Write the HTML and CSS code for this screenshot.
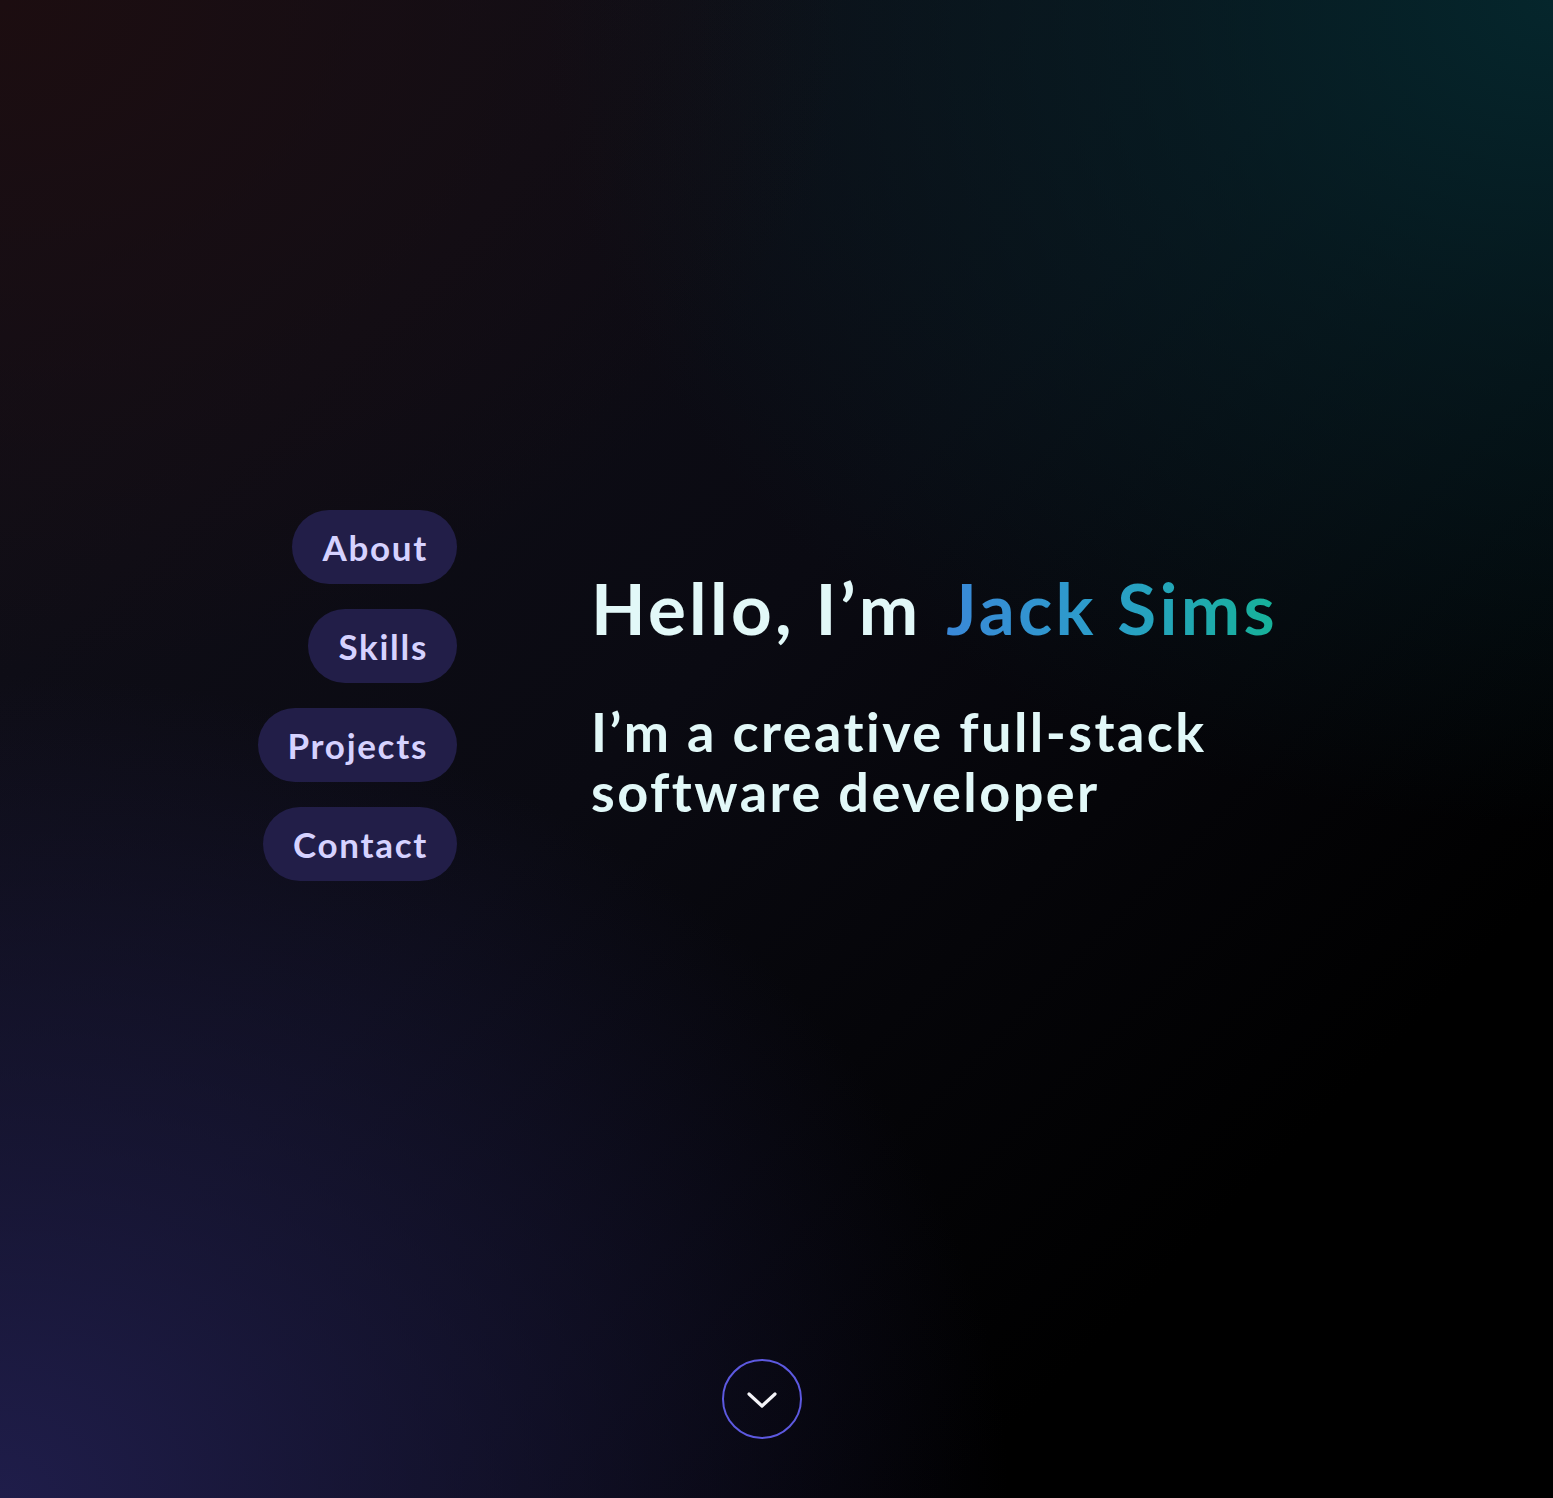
FILE: index.html
```html
<!DOCTYPE html>
<html lang="en">
<head>
<meta charset="utf-8">
<title>Jack Sims</title>
<link rel="stylesheet" href="styles.css">
</head>
<body>
<div class="page">
  <section class="hero">
    <nav class="nav">
      <a class="pill" href="#about">About</a>
      <a class="pill" href="#skills">Skills</a>
      <a class="pill" href="#projects">Projects</a>
      <a class="pill" href="#contact">Contact</a>
    </nav>
    <div class="intro">
      <h1 class="title">Hello, I’m <span class="name">Jack Sims</span></h1>
      <p class="tagline">I’m a creative full-stack<br>software developer</p>
    </div>
  </section>
  <div class="scroll-row">
    <a class="scroll" href="#about" aria-label="Scroll down">
      <svg width="32" height="20" viewBox="0 0 32 20" fill="none"><path d="M3 4 L16 16 L29 4" stroke="#f4f4f8" stroke-width="3.2" stroke-linecap="round" stroke-linejoin="round"/></svg>
    </a>
  </div>
</div>
</body>
</html>
```

FILE: styles.css
```css
html, body {
  margin: 0;
  padding: 0;
}
body {
  font-family: "Lato", "Noto Sans", sans-serif;
  background: #000;
}
.page {
  height: 1498px;
  display: flex;
  flex-direction: column;
  background:
    radial-gradient(ellipse 55% 45% at 0% 0%, #1c0d10 0%, rgba(28,13,16,0.6) 40%, rgba(28,13,16,0) 100%),
    radial-gradient(ellipse 65% 55% at 100% 0%, #05262c 0%, rgba(5,38,44,0.55) 40%, rgba(5,38,44,0) 100%),
    radial-gradient(ellipse 65% 55% at 0% 100%, #1f1d4a 0%, rgba(31,29,74,0.6) 40%, rgba(31,29,74,0) 100%),
    linear-gradient(135deg, #12101a 0%, #0a0a12 45%, #000 80%);
}
.hero {
  display: flex;
  align-items: flex-start;
  gap: 134px;
  padding: 510px 0 0 256px;
}
.nav {
  width: 201px;
  display: flex;
  flex-direction: column;
  align-items: flex-end;
  gap: 25px;
}
.pill {
  display: block;
  height: 74px;
  line-height: 74px;
  padding: 0 29px 0 30px;
  border-radius: 37px;
  background: #221e48;
  color: #d6d2ff;
  font-size: 35px;
  font-weight: 700;
  letter-spacing: 1.7px;
  text-decoration: none;
}
.intro {
  color: #e2f8f8;
  padding-top: 58px;
}
.title {
  margin: 0;
  font-size: 71px;
  font-weight: 700;
  line-height: 80px;
  letter-spacing: 3.3px;
}
.name {
  margin-left: 4px;
  background: linear-gradient(90deg, #3a88d8 0%, #2a9fc8 50%, #16b298 100%);
  -webkit-background-clip: text;
  background-clip: text;
  color: transparent;
}
.tagline {
  margin: 54px 0 0;
  font-size: 54px;
  font-weight: 700;
  line-height: 60px;
  letter-spacing: 2.45px;
}
.scroll-row {
  display: flex;
  justify-content: center;
  padding-right: 29px;
  margin-top: 478px;
}
.scroll {
  width: 76px;
  height: 76px;
  border: 2px solid #5d59e0;
  border-radius: 50%;
  display: flex;
  align-items: center;
  justify-content: center;
}
.scroll svg {
  margin-top: 2px;
}
```
